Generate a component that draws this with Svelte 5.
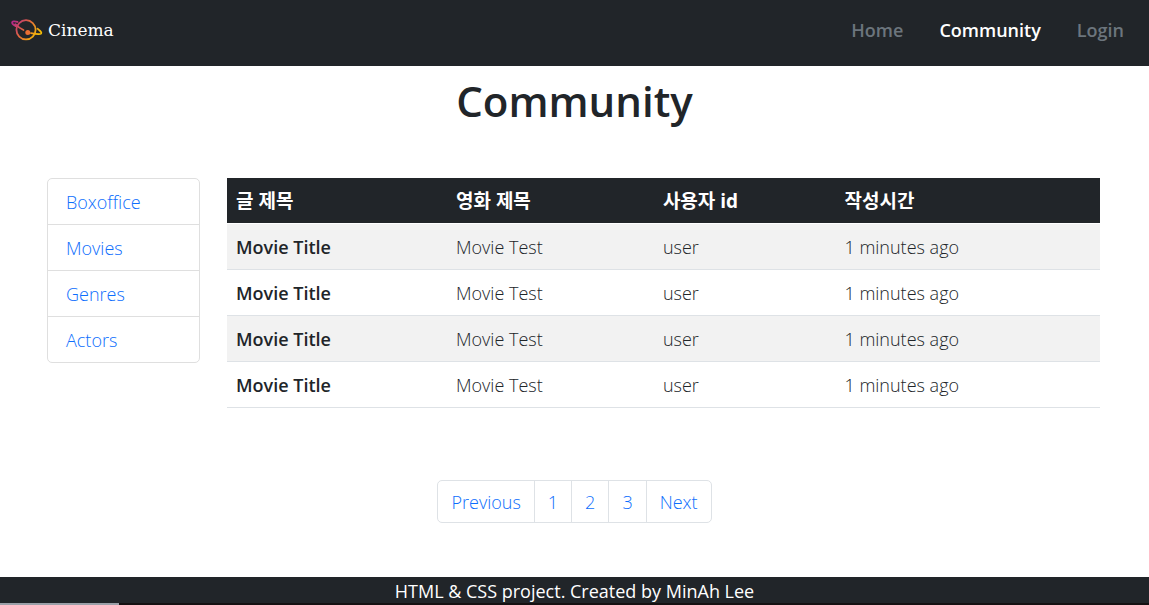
<script>
  const nav = [
    { label: 'Home', active: false },
    { label: 'Community', active: true },
    { label: 'Login', active: false },
  ];
  const categories = ['Boxoffice', 'Movies', 'Genres', 'Actors'];
  const columns = ['글 제목', '영화 제목', '사용자 id', '작성시간'];
  const posts = Array.from({ length: 4 }, () => ({
    title: 'Movie Title',
    movie: 'Movie Test',
    user: 'user',
    time: '1 minutes ago',
  }));
  const pages = ['Previous', '1', '2', '3', 'Next'];
</script>

<div class="page">
  <header>
    <a class="brand" href="#home">
      <svg width="32" height="24" viewBox="0 0 32 24" fill="none" aria-hidden="true">
        <defs>
          <linearGradient id="planet" x1="2" y1="4" x2="24" y2="20" gradientUnits="userSpaceOnUse">
            <stop offset="0" stop-color="#b52a86" />
            <stop offset="0.45" stop-color="#e0663f" />
            <stop offset="1" stop-color="#f5bd05" />
          </linearGradient>
        </defs>
        <g stroke="url(#planet)" stroke-width="1.8" stroke-linecap="round" stroke-linejoin="round">
          <circle cx="15" cy="10.800" r="9.600" />
          <path d="M6.500 2.900C3.500 2 1.200 2.300 1.100 3.500C1 4.600 2.400 5.800 4.800 7.100M4.300 5.200C7 8 9 9.600 12.500 11" />
          <path d="M26.500 9.600C29.500 12 31 13.600 30.100 14.600C28.800 15.600 24.500 15 20 14.100" />
        </g>
        <circle cx="16.800" cy="13.400" r="2.500" fill="#ea6f33" />
      </svg>
      <span>Cinema</span>
    </a>
    <nav>
      {#each nav as item}
        <a href="#{item.label.toLowerCase()}" class:active={item.active}>{item.label}</a>
      {/each}
    </nav>
  </header>

  <h1>Community</h1>

  <main>
    <ul class="categories">
      {#each categories as category}
        <li><a href="#{category.toLowerCase()}">{category}</a></li>
      {/each}
    </ul>
    <table>
      <thead>
        <tr>
          {#each columns as column}<th scope="col">{column}</th>{/each}
        </tr>
      </thead>
      <tbody>
        {#each posts as post}
          <tr>
            <th scope="row">{post.title}</th>
            <td>{post.movie}</td>
            <td>{post.user}</td>
            <td>{post.time}</td>
          </tr>
        {/each}
      </tbody>
    </table>
  </main>

  <div class="pagination">
    {#each pages as page}
      <a href="#page-{page.toLowerCase()}">{page}</a>
    {/each}
  </div>

  <footer>HTML &amp; CSS project. Created by MinAh Lee</footer>
  <div class="backdrop"></div>
</div>

<style>
  :global(body) {
    background: #fff;
  }
  .page {
    font-family: 'Open Sans', 'Noto Sans CJK KR', sans-serif;
    font-size: 18px;
    line-height: 27px;
    color: #212529;
    display: flex;
    flex-direction: column;
    min-height: 100vh;
  }
  a {
    color: #0d6efd;
    text-decoration: none;
  }
  header {
    display: flex;
    align-items: center;
    justify-content: space-between;
    background: #212529;
    padding: 0 25px 5px 11px;
    min-height: 61px;
  }
  .brand {
    display: flex;
    align-items: center;
    gap: 5px;
    color: #fff;
    font-family: 'DejaVu Serif', serif;
    font-size: 17px;
  }
  nav {
    display: flex;
    gap: 36px;
    font-weight: 600;
  }
  nav a {
    color: #6c757d;
  }
  nav a.active {
    color: #fff;
  }
  h1 {
    margin: 8px 0 0;
    font-size: 42px;
    line-height: 54px;
    font-weight: 600;
    text-align: center;
  }
  main {
    display: grid;
    grid-template-columns: repeat(12, 1fr);
    column-gap: 27px;
    align-items: start;
    padding: 50px 49px 0 47px;
  }
  .categories {
    grid-column: span 2;
    list-style: none;
    margin: 0;
    padding: 0;
    border: 1px solid #dfdfdf;
    border-radius: 5px;
    font-weight: 300;
  }
  .categories li + li {
    border-top: 1px solid #dfdfdf;
  }
  .categories a {
    display: block;
    padding: 10px 18px 8px;
  }
  table {
    grid-column: span 10;
    width: 100%;
    table-layout: fixed;
    border-collapse: collapse;
    font-weight: 300;
  }
  th,
  td {
    box-sizing: border-box;
    padding: 10px 9px 8px;
    text-align: left;
    border-bottom: 1px solid #dee2e6;
  }
  th {
    font-weight: 600;
  }
  thead th {
    background: #212529;
    color: #fff;
    border-bottom-color: #fff;
    font-size: 19px;
    font-weight: 700;
  }
  thead th:nth-child(1) {
    width: 25.2%;
  }
  thead th:nth-child(2) {
    width: 23.7%;
  }
  thead th:nth-child(3) {
    width: 20.8%;
  }
  tbody tr:nth-child(odd) {
    background: #f2f2f2;
  }
  .pagination {
    display: flex;
    align-self: center;
    margin: 72px 0 54px;
    border: 1px solid #dee2e6;
    border-radius: 5px;
    font-weight: 300;
  }
  .pagination a {
    padding: 8px 13px 6px;
  }
  .pagination a + a {
    border-left: 1px solid #dee2e6;
  }
  footer {
    background: #212529;
    color: #fff;
    text-align: center;
    line-height: 26px;
    padding-top: 1px;
    margin-top: auto;
  }
  .backdrop {
    height: 2px;
    margin-top: -1px;
    background: linear-gradient(90deg, #9aa0a8 0 119px, #151112 119px);
  }
</style>
